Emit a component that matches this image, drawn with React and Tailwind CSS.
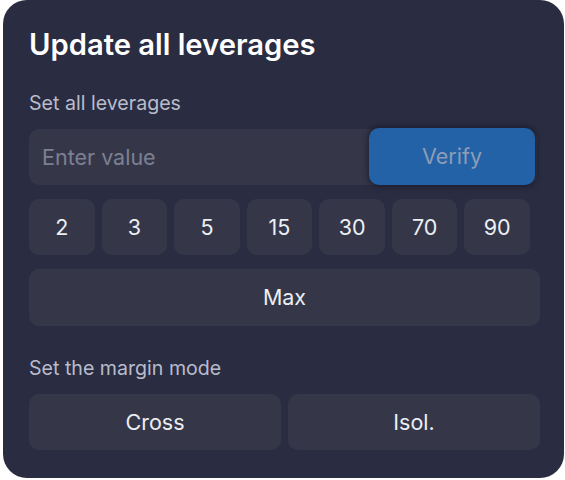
import React, { useState } from "react";

const levels = [2, 3, 5, 15, 30, 70, 90];

export default function App() {
  const [value, setValue] = useState("");

  return (
    <div className="w-[565px] h-[480px] bg-white" style={{ fontFamily: "Inter, 'Noto Sans', sans-serif" }}>
      <div className="ml-[3px] w-[561px] h-[478px] rounded-[24px] bg-[#2a2c41] pl-[26px] pt-[27px]">
        <h2 className="text-[29.2px] leading-[36px] font-semibold text-white">
          Update all leverages
        </h2>
        <p className="mt-[27px] text-[19.6px] leading-[26px] text-[#b9bccb]">Set all leverages</p>

        <div className="mt-[13px] w-[508px] h-[56px] flex rounded-[10px] bg-[#353749]">
          <input
            type="text"
            value={value}
            onChange={(e) => setValue(e.target.value)}
            placeholder="Enter value"
            className="flex-1 min-w-0 bg-transparent pl-[13px] text-[21.5px] text-white placeholder-[#7d8092] outline-none"
          />
          <button className="w-[166px] h-[57px] -mt-px mr-[2px] rounded-[10px] bg-[#2362a7] text-[21.5px] text-[#8e9cb6] shadow-[0_0_5px_2px_rgba(20,22,38,0.55)]">
            Verify
          </button>
        </div>

        <div className="mt-[14px] w-[501px] grid grid-cols-7 gap-[7px]">
          {levels.map((n) => (
            <button
              key={n}
              className="h-[56px] rounded-[10px] bg-[#353749] text-[21.5px] text-[#eceef3]"
            >
              {n}
            </button>
          ))}
        </div>

        <button className="mt-[14px] w-[511px] h-[57px] rounded-[10px] bg-[#353749] text-[21.5px] text-[#eceef3]">
          Max
        </button>

        <p className="mt-[29px] text-[19.6px] leading-[26px] text-[#b9bccb]">Set the margin mode</p>

        <div className="mt-[13px] w-[511px] grid grid-cols-2 gap-[7px]">
          <button className="h-[56px] rounded-[10px] bg-[#353749] text-[21.5px] text-[#eceef3]">Cross</button>
          <button className="h-[56px] rounded-[10px] bg-[#353749] text-[21.5px] text-[#eceef3]">Isol.</button>
        </div>
      </div>
    </div>
  );
}
